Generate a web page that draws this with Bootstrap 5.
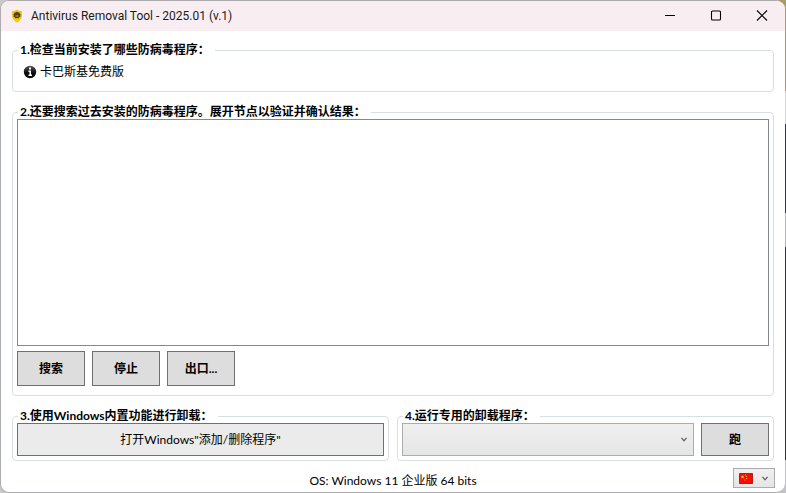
<!DOCTYPE html>
<html lang="zh-CN">
<head>
<meta charset="utf-8">
<meta name="viewport" content="width=device-width, initial-scale=1">
<title>Antivirus Removal Tool</title>
<link href="https://cdn.jsdelivr.net/npm/bootstrap@5.3.0/dist/css/bootstrap.min.css" rel="stylesheet">
<style>
body {
  font: 12px/14px Lato, "Noto Sans CJK SC", sans-serif;
  color: #000;
  background: linear-gradient(#a89c66 0 91px, #d8d8d8 91px 124px, #33373d 124px 213px, #b9b9b9 213px 247px, #303036 247px 460px, #c4c4c8 460px) right / 8px 100% no-repeat, #c9c9cb;
}
.app-window { border: 1px solid #adabad; border-right: 0; border-radius: 9px; margin-right: 1px; background: #fff; }
.title-bar { height: 30px; background: #f8eef2; padding-left: 9px; font-family: Roboto, sans-serif; color: #1a1a1a; }
.title-bar h1 { font-size: 12px; line-height: 16px; font-weight: 400; margin-left: 7px; }
.caption-btn { width: 46px; height: 30px; border: 0; background: none; padding: 0; }
.content-area { padding: 12px 11px 0; }
.group-box { border: 1px solid #d5dfe5; border-radius: 4px; padding: 0 4px 4px; }
.group-box legend { font-size: 12px; line-height: 14px; font-weight: 700; padding: 0 5px 0 2px; margin-left: 1px; }
.detected { height: 30px; padding-left: 6px; gap: 3px; }
.group-search { margin-top: 13px; padding-bottom: 9px; }
.result-tree { border: 1px solid #828790; resize: none; height: calc(100vh - 266px); min-height: 120px; }
.tool-row { margin-top: 5px; gap: 7px; }
.tool-btn { min-width: 68px; height: 35px; border: 1px solid #707070; background: #ddd; color: #000; font-weight: 700; padding: 0 16px; }
.open-btn { height: 33px; border: 1px solid #707070; background: #ebebeb; color: #000; }
.bottom-row { margin-top: 13px; gap: 8px; }
.group-flex { flex: 1 1 0; min-width: 0; }
.run-row { gap: 7px; }
.run-row .tool-btn { height: 33px; }
.drop-list {
  appearance: none; border: 1px solid #acacac; border-radius: 0; color: #000; min-width: 0;
  background: url("data:image/svg+xml,%3Csvg xmlns='http://www.w3.org/2000/svg' width='6' height='5'%3E%3Cpath d='M.5.8 3 3.8 5.5.8' fill='none' stroke='%23606060' stroke-width='1.3'/%3E%3C/svg%3E") right 6px center no-repeat, linear-gradient(#f0f0f0, #e5e5e5);
}
.tool-list { height: 33px; }
.lang-list {
  width: 42px; height: 20px;
  background: url("data:image/svg+xml,%3Csvg xmlns='http://www.w3.org/2000/svg' width='14' height='11'%3E%3Cpath d='M.5.5h13v10H.5z' fill='%23f80b08' stroke='%23b51c17'/%3E%3Cpath d='m3.5 2 .5 1.3h1.3l-1 .8.4 1.4-1.2-.8-1.2.8.4-1.4-1-.8H3z' fill='%23ffe000'/%3E%3Cpath d='M6 1.5h1v1H6zM7 3h1v1H7zM7 5h1v1H7zM5.500 6.500h1v1h-1z' fill='%23ffb000'/%3E%3C/svg%3E") 5px center no-repeat,
  url("data:image/svg+xml,%3Csvg xmlns='http://www.w3.org/2000/svg' width='6' height='5'%3E%3Cpath d='M.5.8 3 3.8 5.5.8' fill='none' stroke='%23606060' stroke-width='1.3'/%3E%3C/svg%3E") right 6px center no-repeat, linear-gradient(#f0f0f0, #e5e5e5);
}
.status-bar { display: grid; grid-template-columns: 1fr auto 1fr; padding: 6px 10px 4px; }
.status-bar output { padding-top: 6px; }
</style>
</head>
<body>
<div class="app-window d-flex flex-column min-vh-100 overflow-hidden">
  <header class="title-bar d-flex align-items-center">
    <svg width="14" height="14" viewBox="0 0 14 14" aria-hidden="true">
      <path d="M7 .5c1.600 1 3 1.500 5 1.500v4.500c0 3-2 5.500-5 7-3-1.500-5-4-5-7V2C4 2 5.400 1.500 7 .5z" fill="#f7c90c"/>
      <path d="m7 2.500 1 1 1.400-.3.200 1.300 1.200.7-.6 1.200.4 1.400-1.400.4-.7 1.200L7 9l-1.500.4-.7-1.200-1.400-.4.400-1.400-.6-1.200 1.200-.7.200-1.300L6 3.500z" fill="#4c431c"/>
      <path d="M5.500 6.300h3v1.500h-3z" fill="#a98b15"/>
    </svg>
    <h1 class="mb-0 me-auto">Antivirus Removal Tool - 2025.01 (v.1)</h1>
    <button class="caption-btn d-flex align-items-center justify-content-center" type="button" aria-label="最小化"><svg width="12" height="12"><path d="M1 5.500h10" stroke="#000"/></svg></button>
    <button class="caption-btn d-flex align-items-center justify-content-center" type="button" aria-label="最大化"><svg width="12" height="12"><rect x="1.500" y="1" width="9" height="9" rx="1" fill="none" stroke="#000" stroke-width="1.100"/></svg></button>
    <button class="caption-btn d-flex align-items-center justify-content-center" type="button" aria-label="关闭"><svg width="12" height="12"><path d="m1 .5 10 10M11 .5l-10 10" stroke="#000" stroke-width="1.100"/></svg></button>
  </header>

  <main class="content-area flex-grow-1">
    <fieldset class="group-box">
      <legend class="float-none w-auto mb-0">1.检查当前安装了哪些防病毒程序：</legend>
      <div class="detected d-flex align-items-center">
        <svg width="14" height="14" viewBox="0 0 14 14" aria-hidden="true"><defs><linearGradient id="disc" x2="0" y2="1"><stop stop-color="#555"/><stop offset=".6" stop-color="#080808"/></linearGradient></defs><circle cx="7" cy="7" r="6.200" fill="url(#disc)"/><path d="M6 2.500h2v2H6zM5.500 5.500H8v4h1v1.500H5.500V9.500h1V7h-1z" fill="#fff"/></svg>
        <span>卡巴斯基免费版</span>
      </div>
    </fieldset>

    <fieldset class="group-box group-search">
      <legend class="float-none w-auto mb-0">2.还要搜索过去安装的防病毒程序。展开节点以验证并确认结果：</legend>
      <textarea class="result-tree d-block w-100" aria-label="搜索结果" readonly></textarea>
      <div class="tool-row d-flex">
        <button class="tool-btn" type="button">搜索</button>
        <button class="tool-btn" type="button">停止</button>
        <button class="tool-btn" type="button">出口...</button>
      </div>
    </fieldset>

    <div class="bottom-row d-flex">
      <fieldset class="group-box group-flex">
        <legend class="float-none w-auto mb-0">3.使用Windows内置功能进行卸载：</legend>
        <button class="open-btn d-block w-100" type="button">打开Windows"添加/删除程序"</button>
      </fieldset>
      <fieldset class="group-box group-flex">
        <legend class="float-none w-auto mb-0">4.运行专用的卸载程序：</legend>
        <div class="run-row d-flex">
          <select class="drop-list tool-list flex-grow-1" aria-label="专用的卸载程序"><option></option></select>
          <button class="tool-btn" type="button">跑</button>
        </div>
      </fieldset>
    </div>
  </main>

  <footer class="status-bar">
    <span></span>
    <output>OS: Windows 11 企业版 64 bits</output>
    <select class="drop-list lang-list ms-auto" aria-label="语言"><option></option></select>
  </footer>
</div>
<script src="https://cdn.jsdelivr.net/npm/bootstrap@5.3.0/dist/js/bootstrap.bundle.min.js"></script>
</body>
</html>
